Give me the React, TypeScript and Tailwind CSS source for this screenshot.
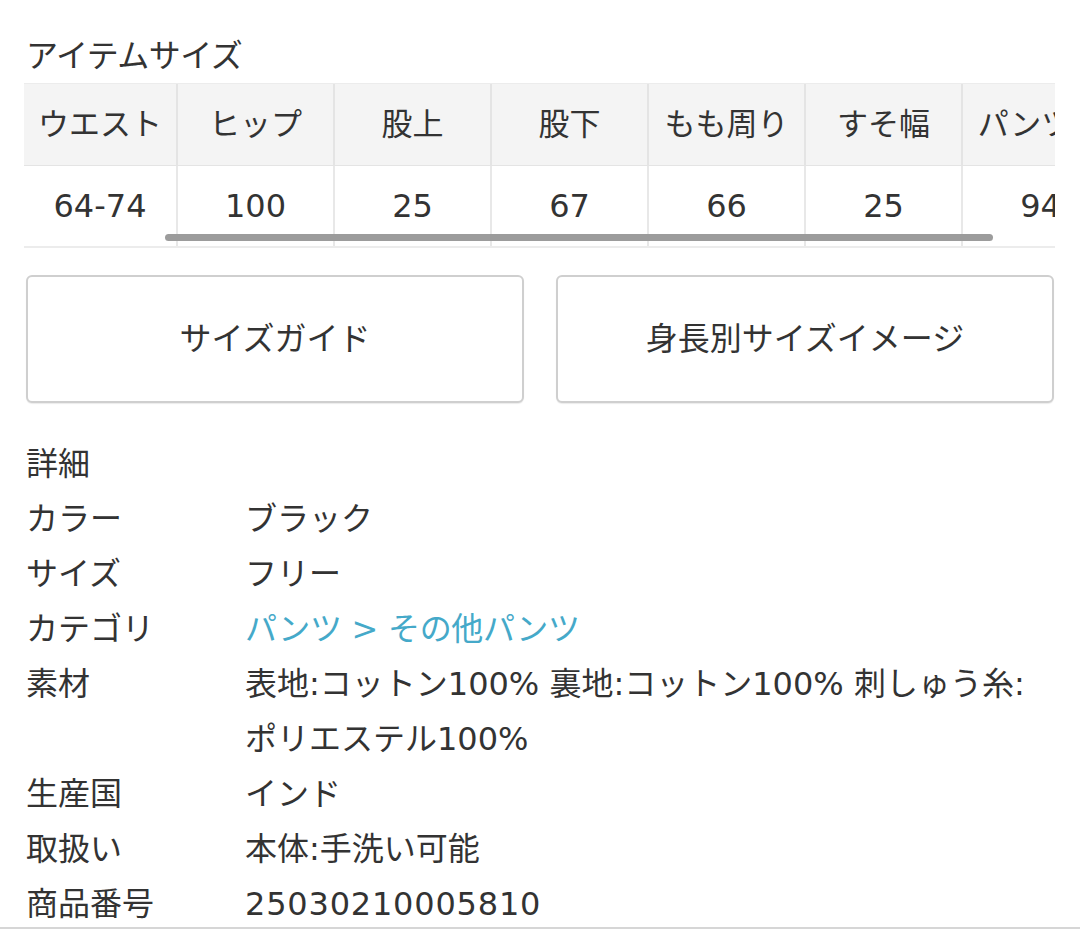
import React from "react";

const headers = ["ウエスト", "ヒップ", "股上", "股下", "もも周り", "すそ幅", "パンツ丈"];
const values = ["64-74", "100", "25", "67", "66", "25", "94"];

const rows: { label: string; value: React.ReactNode }[] = [
  { label: "カラー", value: "ブラック" },
  { label: "サイズ", value: "フリー" },
  {
    label: "カテゴリ",
    value: <span className="text-[#45a9c9] tracking-[-0.3px]">パンツ &gt; その他パンツ</span>,
  },
  {
    label: "素材",
    value: (
      <>
        表地:コットン100% 裏地:コットン100% 刺しゅう糸:
        <br />
        ポリエステル100%
      </>
    ),
  },
  { label: "生産国", value: "インド" },
  { label: "取扱い", value: "本体:手洗い可能" },
  { label: "商品番号", value: <span className="tracking-[0.8px]">25030210005810</span> },
];

export default function App() {
  return (
    <div
      className="w-[1080px] h-[929px] overflow-hidden bg-white text-[#333] relative"
      style={{ fontFamily: '"DejaVu Sans", "Noto Sans CJK JP", sans-serif' }}
    >
      <div className="pl-[26px] pt-[33px] text-[32px] leading-[46px] tracking-[-0.5px]">アイテムサイズ</div>
      <div className="relative ml-[24px] mt-[4px] w-[1031px] overflow-hidden border-t border-[#ececec]">
        <div className="flex w-max bg-[#f4f4f4] border-b border-[#e4e4e4]">
          {headers.map((h, i) => (
            <div
              key={h}
              className={`h-[81px] flex items-center justify-center text-[31px] whitespace-nowrap ${
                i === 0 ? "w-[152px]" : "w-[157px] border-l-2 border-[#e4e4e4]"
              }`}
            >
              {h}
            </div>
          ))}
        </div>
        <div className="flex w-max border-b-2 border-[#ececec]">
          {values.map((v, i) => (
            <div
              key={i}
              className={`h-[80px] flex items-center justify-center text-[32px] ${
                i === 0 ? "w-[152px]" : "w-[157px] border-l-2 border-[#e8e8e8]"
              }`}
            >
              {v}
            </div>
          ))}
        </div>
        <div className="absolute left-[141px] top-[150px] w-[828px] h-[7px] rounded-full bg-[#9c9c9c]" />
      </div>
      <div className="flex gap-[32px] px-[26px] mt-[27px]">
        <button className="w-[498px] h-[128px] rounded-[6px] border-2 border-[#cfcfcf] bg-white text-[32px] text-[#333] shadow-[0_1px_1px_rgba(0,0,0,0.08)]">
          サイズガイド
        </button>
        <button className="w-[498px] h-[128px] rounded-[6px] border-2 border-[#cfcfcf] bg-white text-[32px] text-[#333] shadow-[0_1px_1px_rgba(0,0,0,0.08)]">
          身長別サイズイメージ
        </button>
      </div>
      <div className="px-[26px] mt-[34px] text-[32px] leading-[55px]">
        <div>詳細</div>
        {rows.map((r) => (
          <div key={r.label} className="flex">
            <div className="w-[219px] shrink-0">{r.label}</div>
            <div className="whitespace-nowrap">{r.value}</div>
          </div>
        ))}
      </div>
      <div className="absolute left-0 bottom-0 w-full h-[2px] bg-[#d6d6d6]" />
    </div>
  );
}
